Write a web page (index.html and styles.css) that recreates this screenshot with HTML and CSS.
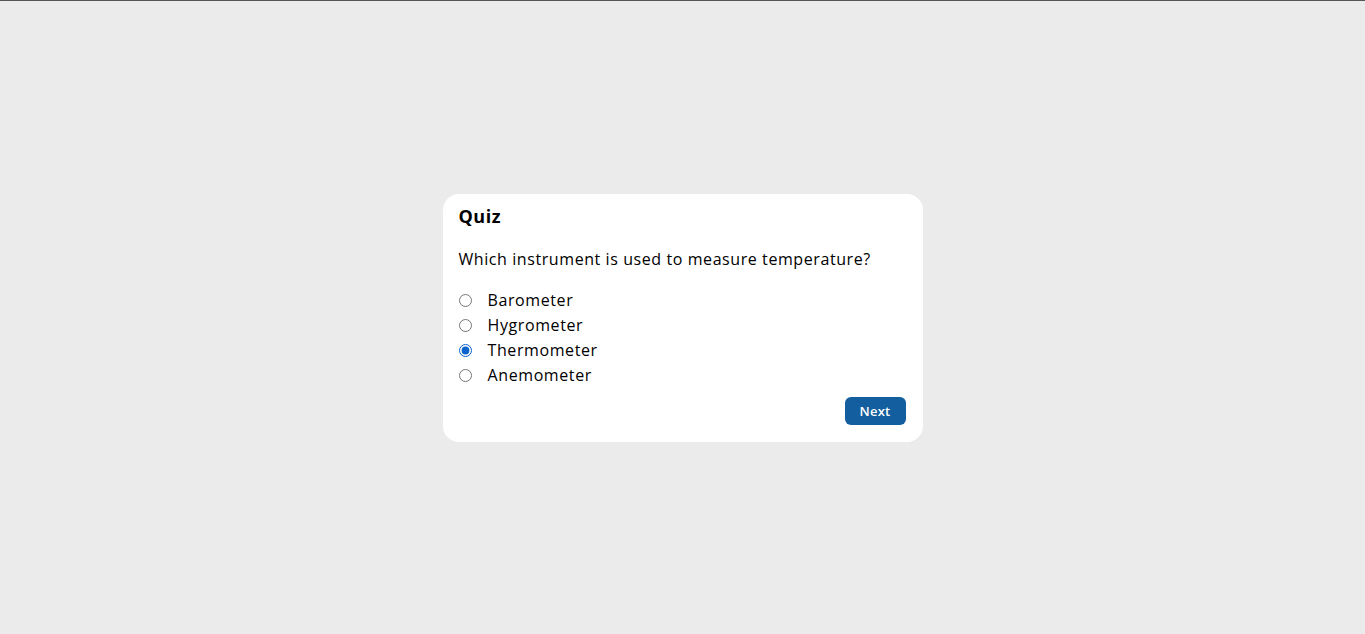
FILE: index.html
```html
<!DOCTYPE html>
<html lang="en">
<head>
<meta charset="utf-8">
<title>Quiz</title>
<link rel="stylesheet" href="styles.css">
</head>
<body>
<main class="page">
  <section class="card">
    <h2 class="title">Quiz</h2>
    <p class="question">Which instrument is used to measure temperature?</p>
    <ul class="options">
      <li class="option"><input type="radio" name="q" id="o1"><label for="o1">Barometer</label></li>
      <li class="option"><input type="radio" name="q" id="o2"><label for="o2">Hygrometer</label></li>
      <li class="option"><input type="radio" name="q" id="o3" checked><label for="o3">Thermometer</label></li>
      <li class="option"><input type="radio" name="q" id="o4"><label for="o4">Anemometer</label></li>
    </ul>
    <div class="actions">
      <button class="next" type="button">Next</button>
    </div>
  </section>
</main>
</body>
</html>
```

FILE: styles.css
```css
* { box-sizing: border-box; }
html, body { margin: 0; padding: 0; }
body {
  background: #ebebeb;
  border-top: 1px solid #555555;
  font-family: "Open Sans", "Noto Sans", sans-serif;
  color: #000;
}
.page {
  min-height: 633px;
  display: flex;
  align-items: center;
  justify-content: center;
}
.card {
  width: 480px;
  background: #ffffff;
  border-radius: 16px;
  padding: 10px 17px 17px 16px;
}
.title {
  margin: 0;
  font-size: 18px;
  font-weight: 700;
  line-height: 24px;
  letter-spacing: 0.5px;
}
.question {
  margin: 19px 0 17px;
  font-size: 16px;
  line-height: 24px;
  letter-spacing: 0.58px;
}
.options {
  list-style: none;
  margin: 0;
  padding: 0;
  display: flex;
  flex-direction: column;
}
.option {
  display: flex;
  align-items: center;
  height: 25px;
  font-size: 16px;
  letter-spacing: 0.6px;
}
.option input {
  margin: 0 16px 0 0;
  width: 13px;
  height: 13px;
  accent-color: #0b63ce;
}
.actions {
  display: flex;
  justify-content: flex-end;
  margin-top: 9px;
}
.next {
  width: 61px;
  height: 28px;
  border: none;
  border-radius: 6px;
  background: #135e9e;
  color: #ffffff;
  font-family: inherit;
  font-size: 13px;
  font-weight: 600;
  letter-spacing: 0.2px;
  padding: 0;
}
```
